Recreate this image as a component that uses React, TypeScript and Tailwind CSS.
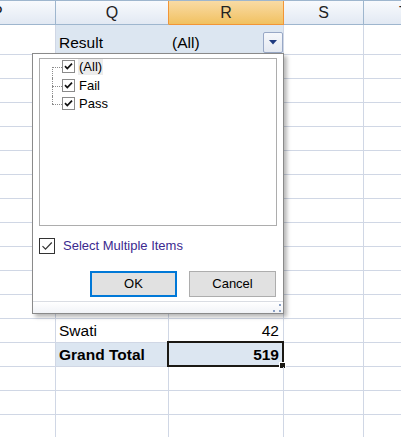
import React from "react";

function Check13() {
  return (
    <span className="flex h-[13px] w-[13px] items-center justify-center border border-[#8a8a8a] bg-white">
      <svg width="11" height="11" viewBox="0 0 11 11">
        <path d="M2 5.2 L4.3 7.6 L9 2.6" fill="none" stroke="#111" strokeWidth="1.7" />
      </svg>
    </span>
  );
}

function TreeRow({ label, first, last, hl }: { label: string; first?: boolean; last?: boolean; hl?: boolean }) {
  return (
    <div className="flex h-[18.5px] items-start">
      <div className="ml-[12px] flex h-[18.5px] w-[10px] flex-col">
        <div className={`h-[8px] ${first ? "" : "border-l border-dotted border-[#8c8c8c]"}`} />
        <div className={`flex-1 border-t border-dotted border-[#8c8c8c] ${last ? "" : "border-l"}`} />
      </div>
      <div className="mt-[1px]">
        <Check13 />
      </div>
      <span
        className={`ml-[3px] px-[1px] text-[13px] leading-[16px] text-black ${hl ? "bg-[#ececec]" : ""}`}
      >
        {label}
      </span>
    </div>
  );
}

export default function App() {
  const dataRows = Array.from({ length: 16 }, (_, i) => i);
  const cell = "border-r border-[#d0d7e5] shrink-0";
  return (
    <div className="relative h-[437px] w-[401px] overflow-hidden bg-white font-['Liberation_Sans',Arial,sans-serif] text-[15.5px] text-black">
      {/* column headers */}
      <div className="flex h-[25px] border-t border-[#9eb6ce] text-[16px]">
        <div className="flex w-[56px] shrink-0 items-center overflow-hidden border-b border-r border-[#9eb6ce] bg-linear-to-b from-[#f8fafd] to-[#e2e9f3] text-[#222]">
          <span className="ml-[-8px]">P</span>
        </div>
        <div className="flex w-[113px] shrink-0 items-center justify-center border-b border-r border-b-[#9eb6ce] border-r-[#f29536] bg-linear-to-b from-[#f8fafd] to-[#e2e9f3] text-[#222]">
          Q
        </div>
        <div className="flex w-[115px] shrink-0 items-center justify-center border-b border-r border-[#f29536] bg-linear-to-b from-[#f9dba4] to-[#f1c15f] text-[#222]">
          R
        </div>
        <div className="flex w-[80px] shrink-0 items-center justify-center border-b border-r border-[#9eb6ce] bg-linear-to-b from-[#f8fafd] to-[#e2e9f3] text-[#222]">
          S
        </div>
        <div className="flex w-[80px] shrink-0 items-center justify-center border-b border-[#9eb6ce] bg-linear-to-b from-[#f8fafd] to-[#e2e9f3] text-[#222]">
          T
        </div>
      </div>

      {/* row 1 : report filter */}
      <div className="flex h-[30px] border-b border-[#d0d7e5]">
        <div className={`${cell} w-[56px]`} />
        <div className="flex w-[113px] shrink-0 items-end bg-[#dce6f1] pb-[2px] pl-[3px] leading-[18px]">Result</div>
        <div className={`${cell} flex w-[115px] items-end bg-[#dce6f1] pb-[1px] pl-[3px] leading-[18px]`}>
          <span className="mb-[1px]">(All)</span>
          <span className="ml-auto flex h-[21px] w-[20px] items-center justify-center rounded-[2px] border border-[#98a8c6] bg-linear-to-b from-[#f6f8fb] to-[#e4e9f2]">
            <svg width="8" height="5" viewBox="0 0 8 5">
              <path d="M0 0 L8 0 L4 4.5 Z" fill="#1f3b80" />
            </svg>
          </span>
        </div>
        <div className={`${cell} w-[80px]`} />
        <div className="w-[80px] shrink-0" />
      </div>

      {dataRows.map((i) => {
        const swati = i === 11;
        const total = i === 12;
        return (
          <div key={i} className="flex h-[24px] border-b border-[#d0d7e5] leading-[18px]">
            <div className={`${cell} w-[56px]`} />
            <div
              className={`${cell} flex w-[113px] items-end pb-[2px] pl-[3px] ${total ? "bg-[#dce6f1] font-bold" : ""}`}
            >
              {swati ? "Swati" : total ? "Grand Total" : ""}
            </div>
            <div
              className={`${cell} relative flex w-[115px] items-end justify-end pb-[2px] pr-[4px] ${total ? "bg-[#dce6f1] font-bold" : ""}`}
            >
              {swati ? "42" : total ? "519" : ""}
              {total && (
                <>
                  <div className="pointer-events-none absolute bottom-[-1px] left-[-2px] right-[-1px] top-[-2px] border-2 border-[#1b1914]" />
                  <div className="absolute bottom-[-3px] right-[-3px] h-[7px] w-[7px] border border-white bg-[#1b1914]" />
                </>
              )}
            </div>
            <div className={`${cell} w-[80px]`} />
            <div className="w-[80px] shrink-0" />
          </div>
        );
      })}

      {/* filter dropdown */}
      <div className="absolute left-[32px] top-[53px] flex h-[261px] w-[252px] flex-col border border-[#8a8a8a] bg-white shadow-[3px_3px_4px_rgba(0,0,0,0.28)]">
        <div className="ml-[6px] mt-[4px] h-[168px] w-[238px] border border-[#adadad] bg-white">
          <TreeRow label="(All)" first hl />
          <TreeRow label="Fail" />
          <TreeRow label="Pass" last />
        </div>
        <div className="ml-[6px] mt-[12px] flex h-[16px] items-center">
          <span className="flex h-[16px] w-[16px] items-center justify-center border border-[#333] bg-white">
            <svg width="14" height="14" viewBox="0 0 14 14">
              <path d="M2.5 7.2 L5.5 10.2 L11.8 3.5" fill="none" stroke="#333" strokeWidth="1.2" />
            </svg>
          </span>
          <span className="ml-[8px] text-[13px] leading-[16px] text-[#3b2a8f]">Select Multiple Items</span>
        </div>
        <div className="ml-[57px] mt-[17px] flex gap-[12px]">
          <button className="flex h-[26px] w-[87px] items-center justify-center border-2 border-[#0078d7] bg-[#e1e1e1] text-[13px] text-black">
            OK
          </button>
          <button className="flex h-[26px] w-[87px] items-center justify-center border border-[#adadad] bg-[#e1e1e1] text-[13px] text-black">
            Cancel
          </button>
        </div>
        <div className="mt-auto flex h-[12px] items-end justify-end border-t border-[#dadde3] bg-linear-to-b from-[#ffffff] to-[#f1f3f7] pb-[1px] pr-[2px]">
          <svg width="8" height="8" viewBox="0 0 8 8">
            <rect x="6" y="0" width="2" height="2" fill="#8aa0c4" />
            <rect x="0" y="6" width="2" height="2" fill="#8aa0c4" />
            <rect x="6" y="6" width="2" height="2" fill="#8aa0c4" />
          </svg>
        </div>
      </div>
    </div>
  );
}
